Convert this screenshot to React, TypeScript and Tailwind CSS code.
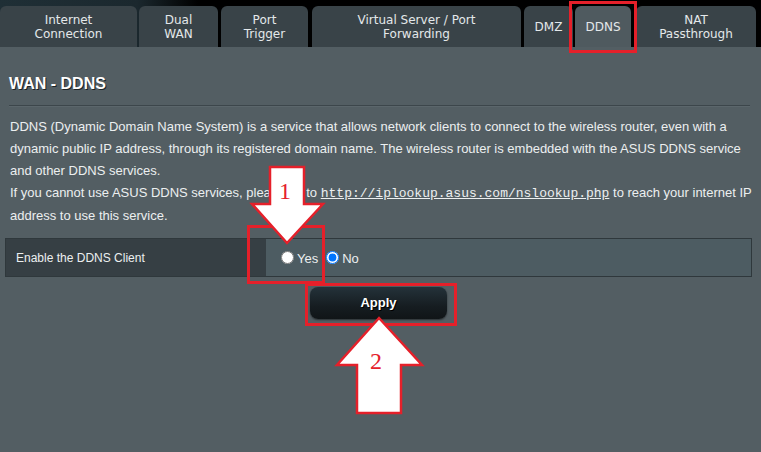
import React from "react";

const tabs: { label: string[]; w: number; ml: number; active?: boolean }[] = [
  { label: ["Internet", "Connection"], w: 137, ml: 0 },
  { label: ["Dual", "WAN"], w: 79, ml: 2 },
  { label: ["Port", "Trigger"], w: 87, ml: 3 },
  { label: ["Virtual Server / Port", "Forwarding"], w: 209, ml: 4 },
  { label: ["DMZ"], w: 49, ml: 3 },
  { label: ["DDNS"], w: 56, ml: 2, active: true },
  { label: ["NAT", "Passthrough"], w: 120, ml: 5 },
];

export default function App() {
  return (
    <div className="relative w-[761px] h-[452px] overflow-hidden bg-[#535e63] font-['Liberation_Sans',Arial,sans-serif]">
      {/* Tab bar */}
      <div className="h-[47px] flex items-end bg-[linear-gradient(90deg,#1f2f36_0%,#1b282e_18%,#000_26%,#000_100%)]">
        {tabs.map((t, i) => (
          <div
            key={i}
            style={{ width: t.w, marginLeft: t.ml }}
            className={`h-[41px] rounded-t-[6px] flex flex-col items-center justify-center text-[12px] leading-[14px] text-[#e4e8ea] font-['DejaVu_Sans',Verdana,sans-serif] ${
              t.active ? "bg-[#4f5a5f]" : "bg-[#394348]"
            }`}
          >
            {t.label.map((l, j) => (
              <span key={j} className="whitespace-nowrap">
                {l}
              </span>
            ))}
          </div>
        ))}
      </div>

      {/* Content */}
      <div className="pt-[27px]">
        <div className="px-[9px]">
          <h1 className="text-[16px] leading-[20px] font-bold text-white [text-shadow:1px_1px_0_#1a2226]">
            WAN - DDNS
          </h1>
          <div className="mt-[11px] h-[2px] border-t border-[#3c464b] bg-[#5b666b] w-[741px]" />
        </div>
        <div className="pl-[10px] pr-[2px] mt-[9px] text-[13px] leading-[22px] text-[#eceff0]">
          <p className="w-[736px]">
            DDNS (Dynamic Domain Name System) is a service that allows network clients to connect to the wireless router, even with a
            dynamic public IP address, through its registered domain name. The wireless router is embedded with the ASUS DDNS service
            and other DDNS services.
          </p>
          <p className="whitespace-nowrap">
            If you cannot use ASUS DDNS services, please go to{" "}
            <span className="underline font-['Liberation_Mono','Courier_New',monospace] text-[13px]">
              http://iplookup.asus.com/nslookup.php
            </span>{" "}
            to reach your internet IP
          </p>
          <p>address to use this service.</p>
        </div>

        {/* Table row */}
        <div className="mx-[5px] mt-[11px] w-[747px] h-[39px] border border-[#2f383c] flex">
          <div className="w-[260px] h-full bg-[#363f44] flex items-center pl-[10px] text-[12px] text-[#eceff0]">
            Enable the DDNS Client
          </div>
          <div className="flex-1 h-full bg-[#4d5c62] flex items-center pl-[15px] text-[13px] text-[#eceff0]">
            <label className="flex items-center">
              <input type="radio" name="ddns" className="m-0 w-[13px] h-[13px]" readOnly />
              <span className="ml-[3px] mt-[2px]">Yes</span>
            </label>
            <label className="flex items-center ml-[8px]">
              <input type="radio" name="ddns" defaultChecked className="m-0 w-[13px] h-[13px] accent-[#0075ff]" />
              <span className="ml-[3px] mt-[2px]">No</span>
            </label>
          </div>
        </div>

        {/* Apply button */}
        <div className="mt-[10px] flex justify-center w-[757px]">
          <button className="w-[137px] h-[32px] rounded-[8px] bg-[linear-gradient(180deg,#24323a_0%,#161d21_60%,#101517_100%)] text-white text-[13px] font-bold [text-shadow:1px_1px_0_#000] shadow-[0_1px_2px_rgba(0,0,0,0.5)]">
            Apply
          </button>
        </div>
      </div>

      {/* Annotations overlay */}
      <svg className="absolute left-0 top-0 pointer-events-none" width="761" height="452" viewBox="0 0 761 452">
        <rect x="570.5" y="2.5" width="65" height="49" fill="none" stroke="#e5202a" strokeWidth="3" />
        <rect x="248.5" y="226.5" width="75" height="56" fill="none" stroke="#e5202a" strokeWidth="3" />
        <rect x="306.5" y="284.5" width="149" height="40" fill="none" stroke="#e5202a" strokeWidth="3" />
        <polygon
          points="270,167 304,167 304,204 323,204 287,243 252,204 270,204"
          fill="#ffffff"
          stroke="#e5202a"
          strokeWidth="2.5"
          strokeLinejoin="miter"
        />
        <text x="285" y="199" textAnchor="middle" fill="#e5202a" fontSize="24" fontFamily="'Liberation Serif', 'Times New Roman', serif">
          1
        </text>
        <polygon
          points="379,318 422,365 401,365 401,413 357,413 357,365 337,365"
          fill="#ffffff"
          stroke="#e5202a"
          strokeWidth="2.5"
          strokeLinejoin="miter"
        />
        <text x="376" y="369" textAnchor="middle" fill="#e5202a" fontSize="24" fontFamily="'Liberation Serif', 'Times New Roman', serif">
          2
        </text>
      </svg>
    </div>
  );
}
